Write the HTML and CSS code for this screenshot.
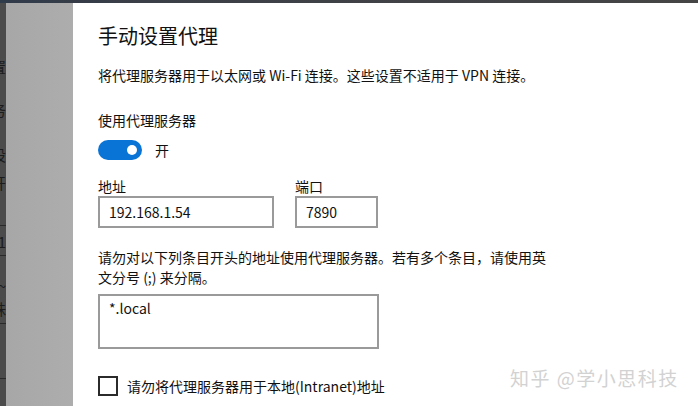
FILE: index.html
```html
<!DOCTYPE html>
<html lang="zh-CN">
<head>
    <meta charset="UTF-8">
    <meta name="viewport" content="width=device-width, initial-scale=1.0">
    <title>手动设置代理</title>
    <link rel="stylesheet" href="styles.css">
</head>
<body>
    <div class="topbar"></div>
    <div class="screen">
        <div class="backdrop">
            <div class="sidebar">
                <span class="side-item s1">置</span>
                <span class="side-item s2">务</span>
                <span class="side-item s3">设</span>
                <span class="side-item s4">开</span>
                <span class="side-rule r1"></span>
                <span class="side-item s5">1</span>
                <span class="side-rule r2"></span>
                <span class="side-item s6">~</span>
                <span class="side-item s7">殊</span>
                <span class="side-rule r3"></span>
                <span class="side-rule r4"></span>
            </div>
            <div class="dim"></div>
        </div>

        <div class="dialog">
            <h1 class="title">手动设置代理</h1>
            <p class="desc">将代理服务器用于以太网或 Wi-Fi 连接。这些设置不适用于 VPN 连接。</p>

            <div class="label use-label">使用代理服务器</div>
            <div class="toggle-row">
                <span class="toggle"><span class="knob"></span></span>
                <span class="toggle-text">开</span>
            </div>

            <div class="fields">
                <div class="field">
                    <div class="label">地址</div>
                    <input type="text" class="input input-addr" value="192.168.1.54">
                </div>
                <div class="field">
                    <div class="label">端口</div>
                    <input type="text" class="input input-port" value="7890">
                </div>
            </div>

            <p class="hint">请勿对以下列条目开头的地址使用代理服务器。若有多个条目，请使用英文分号 (;) 来分隔。</p>
            <textarea class="exceptions">*.local</textarea>

            <div class="check-row">
                <span class="checkbox"></span>
                <span class="check-text">请勿将代理服务器用于本地(Intranet)地址</span>
            </div>

            <div class="watermark">知乎 @学小思科技</div>
        </div>
    </div>
</body>
</html>
```

FILE: styles.css
```css
body {
    margin: 0;
    padding: 0;
    width: 698px;
    height: 406px;
    overflow: hidden;
    font-family: "Noto Sans CJK SC", "Noto Sans", sans-serif;
    color: #111;
    background: #fff;
}

.topbar {
    height: 3px;
    background: linear-gradient(90deg, #2f3a4a 0%, #3b3f47 20%, #454545 100%);
}

.screen {
    display: flex;
    height: 403px;
}

/* dimmed settings window behind the dialog */
.backdrop {
    display: flex;
    width: 73px;
    flex-shrink: 0;
}

.sidebar {
    position: relative;
    width: 6px;
    background: #4b4b4b;
    overflow: hidden;
}

.side-item {
    position: absolute;
    right: 0;
    font-size: 15px;
    line-height: 18px;
    color: #1c1c1c;
    white-space: nowrap;
}

.s1 { top: 55px; }
.s2 { top: 98px; }
.s3 { top: 143px; }
.s4 { top: 171px; }
.s5 { top: 230px; }
.s6 { top: 274px; }
.s7 { top: 297px; }

.side-rule {
    position: absolute;
    left: 0;
    width: 6px;
    height: 1px;
    background: #2a2a2a;
}

.r1 { top: 222px; }
.r2 { top: 252px; }
.r3 { top: 320px; }
.r4 { top: 375px; }

.dim {
    flex: 1;
    background: linear-gradient(90deg, #a7a7a7 0%, #adadad 100%);
}

.dialog {
    position: relative;
    flex: 1;
    background: #fff;
    padding: 19px 0 0 25px;
}

.title {
    margin: 0;
    font-size: 20px;
    font-weight: normal;
    line-height: 28px;
    color: #111;
}

.desc {
    margin: 15px 0 0;
    font-size: 14px;
    line-height: 20px;
}

.label {
    font-size: 14px;
    line-height: 20px;
}

.use-label {
    margin-top: 25px;
}

.toggle-row {
    display: flex;
    align-items: center;
    gap: 13px;
    margin-top: 10px;
}

.toggle {
    display: flex;
    align-items: center;
    justify-content: flex-end;
    width: 44px;
    height: 20px;
    border-radius: 10px;
    background: #0a74d6;
    padding-right: 5px;
    box-sizing: border-box;
}

.knob {
    width: 10px;
    height: 10px;
    border-radius: 50%;
    background: #fff;
}

.toggle-text {
    font-size: 14px;
    line-height: 20px;
}

.fields {
    display: flex;
    gap: 21px;
    margin-top: 17px;
}

.field .label {
    line-height: 19px;
}

.input {
    display: block;
    box-sizing: border-box;
    height: 32px;
    margin: 0;
    padding: 0 0 0 9px;
    border: 2px solid #9a9a9a;
    font-family: inherit;
    font-size: 14px;
    color: #111;
    background: #fff;
    outline: none;
}

.input-addr {
    width: 176px;
}

.input-port {
    width: 83px;
}

.hint {
    width: 460px;
    margin: 19px 0 0;
    font-size: 14px;
    line-height: 20px;
}

.exceptions {
    display: block;
    box-sizing: border-box;
    width: 281px;
    height: 55px;
    margin-top: 7px;
    padding: 2px 9px;
    border: 2px solid #9a9a9a;
    font-family: inherit;
    font-size: 14px;
    line-height: 20px;
    color: #111;
    resize: none;
    outline: none;
}

.check-row {
    display: flex;
    align-items: center;
    gap: 9px;
    margin-top: 27px;
}

.checkbox {
    width: 20px;
    height: 20px;
    box-sizing: border-box;
    border: 2px solid #2b2b2b;
}

.check-text {
    font-size: 14px;
    line-height: 20px;
}

.watermark {
    position: absolute;
    left: 437px;
    top: 361px;
    font-size: 19px;
    color: #d2d2d2;
    letter-spacing: 1.5px;
    white-space: nowrap;
}
```
